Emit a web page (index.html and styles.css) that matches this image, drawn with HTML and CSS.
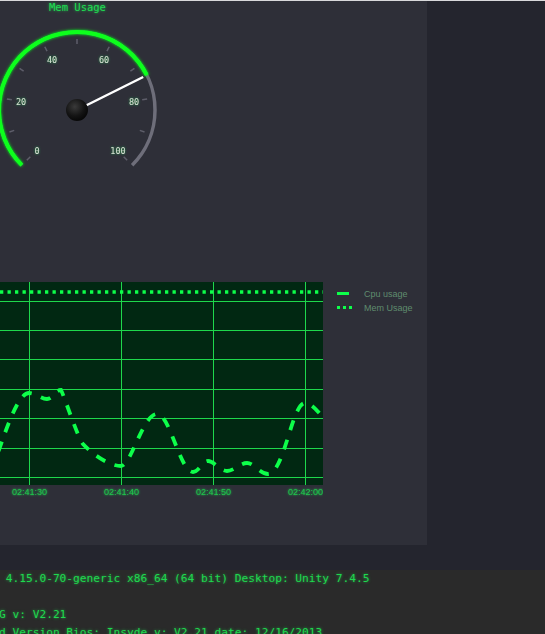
FILE: index.html
```html
<!DOCTYPE html>
<html>
<head>
<meta charset="utf-8">
<link rel="stylesheet" href="styles.css">
</head>
<body>
<div class="topline"></div>
<div class="main">
  <div class="panel">
    <div class="gauge">
      <div class="gauge-title">Mem Usage</div>
      <svg class="gauge-svg" width="160" height="160" viewBox="0 14 160 160">
        <defs>
          <filter id="glow" x="-20%" y="-20%" width="140%" height="140%">
            <feGaussianBlur stdDeviation="1.6" result="b"/>
            <feMerge><feMergeNode in="b"/><feMergeNode in="SourceGraphic"/></feMerge>
          </filter>
          <filter id="tglow" x="-50%" y="-50%" width="200%" height="200%">
            <feGaussianBlur stdDeviation="1.2" result="b"/>
            <feFlood flood-color="#20ff60" flood-opacity="0.55"/>
            <feComposite in2="b" operator="in" result="g"/>
            <feMerge><feMergeNode in="g"/><feMergeNode in="SourceGraphic"/></feMerge>
          </filter>
          <radialGradient id="hub" cx="40%" cy="35%" r="70%">
            <stop offset="0" stop-color="#3a3a3a"/>
            <stop offset="0.6" stop-color="#141414"/>
            <stop offset="1" stop-color="#050505"/>
          </radialGradient>
        </defs>
        <path class="arc-bg" d="M 21.85 165.15 A 78 78 0 1 1 132.15 165.15"/>
        <path class="arc-val" filter="url(#glow)" d="M 21.85 165.15 A 78 78 0 1 1 146.8 75.2"/>
        <g class="ticks">
          <line x1="30.33" y1="156.67" x2="26.8" y2="160.2"/>
          <line x1="14.23" y1="130.39" x2="9.47" y2="131.94"/>
          <line x1="11.81" y1="99.68" x2="6.87" y2="98.9"/>
          <line x1="23.61" y1="71.21" x2="19.56" y2="68.27"/>
          <line x1="47.04" y1="51.19" x2="44.77" y2="46.74"/>
          <line x1="77" y1="44" x2="77" y2="39"/>
          <line x1="106.96" y1="51.19" x2="109.23" y2="46.74"/>
          <line x1="130.39" y1="71.21" x2="134.44" y2="68.27"/>
          <line x1="142.19" y1="99.68" x2="147.13" y2="98.9"/>
          <line x1="139.77" y1="130.39" x2="144.53" y2="131.94"/>
          <line x1="123.67" y1="156.67" x2="127.2" y2="160.2"/>
        </g>
        <g class="labels" filter="url(#tglow)">
          <text x="37" y="154">0</text>
          <text x="21" y="105">20</text>
          <text x="52" y="63">40</text>
          <text x="104" y="63">60</text>
          <text x="134" y="105">80</text>
          <text x="118" y="154">100</text>
        </g>
        <line class="needle" x1="77" y1="110" x2="143.2" y2="77"/>
        <circle cx="77" cy="110" r="11" fill="url(#hub)"/>
      </svg>
    </div>

    <div class="chart-row">
      <svg class="chart" width="323" height="215" viewBox="0 282 323 215">
        <defs>
          <filter id="lglow" x="-20%" y="-50%" width="140%" height="200%">
            <feGaussianBlur stdDeviation="1" result="b"/>
            <feMerge><feMergeNode in="b"/><feMergeNode in="SourceGraphic"/></feMerge>
          </filter>
          <clipPath id="plotclip"><rect x="0" y="282" width="323" height="203"/></clipPath>
        </defs>
        <rect class="plot-bg" x="0" y="282" width="323" height="203"/>
        <g class="grid">
          <line x1="0" y1="301.5" x2="323" y2="301.5"/>
          <line x1="0" y1="330.5" x2="323" y2="330.5"/>
          <line x1="0" y1="359.5" x2="323" y2="359.5"/>
          <line x1="0" y1="389.5" x2="323" y2="389.5"/>
          <line x1="0" y1="418.5" x2="323" y2="418.5"/>
          <line x1="0" y1="448.5" x2="323" y2="448.5"/>
          <line x1="0" y1="477.5" x2="323" y2="477.5"/>
          <line x1="29.5" y1="282" x2="29.5" y2="485"/>
          <line x1="121.5" y1="282" x2="121.5" y2="485"/>
          <line x1="213.5" y1="282" x2="213.5" y2="485"/>
          <line x1="305.5" y1="282" x2="305.5" y2="485"/>
        </g>
        <g clip-path="url(#plotclip)">
          <line class="mem-line" x1="0" y1="292" x2="330" y2="292"/>
          <path class="cpu-line" d="M -8 470 C 4 436, 17 393, 29 393 C 36 393, 41 399, 47 399 C 53 399, 55 390, 61 390 C 65 398, 77 436, 83 444 C 90 452, 108 466, 121 466 C 131 466, 143 414, 157 414 C 170 414, 180 472, 193 472 C 199 472, 202 461, 208 461 C 214 461, 220 471, 227 471 C 234 471, 240 463, 247 463 C 254 463, 260 474, 268 474 C 284 474, 292 403, 305 403 C 313 403, 320 415, 330 425"/>
        </g>
        <g class="xlabels" filter="url(#lglow)">
          <text x="29.5" y="495">02:41:30</text>
          <text x="121.5" y="495">02:41:40</text>
          <text x="213.5" y="495">02:41:50</text>
          <text x="305.5" y="495">02:42:00</text>
        </g>
      </svg>
      <div class="legend">
        <div class="legend-item">
          <span class="swatch-solid"></span>
          <span class="legend-text">Cpu usage</span>
        </div>
        <div class="legend-item">
          <span class="swatch-dots"><i></i><i></i><i></i></span>
          <span class="legend-text">Mem Usage</span>
        </div>
      </div>
    </div>
  </div>
</div>
<div class="strip"></div>
<div class="console">
  <div class="console-text">
    <div class="cline"> 4.15.0-70-generic x86_64 (64 bit) Desktop: Unity 7.4.5</div>
    <div class="cline">&nbsp;</div>
    <div class="cline">G v: V2.21</div>
    <div class="cline">d Version Bios: Insyde v: V2.21 date: 12/16/2013</div>
  </div>
</div>
</body>
</html>
```

FILE: styles.css
```css
html, body {
  margin: 0;
  padding: 0;
}
body {
  width: 545px;
  height: 634px;
  overflow: hidden;
  background: #24252e;
  font-family: "DejaVu Sans Mono", monospace;
}
.topline {
  height: 1px;
  background: #d9d9db;
}
.main {
  display: flex;
}
.panel {
  width: 427px;
  height: 544px;
  background: #2e2f38;
  display: flex;
  flex-direction: column;
}
.gauge {
  width: 160px;
  height: 173px;
}
.gauge-title {
  width: 155px;
  height: 13px;
  line-height: 13px;
  text-align: center;
  font-family: "DejaVu Sans Mono", monospace;
  font-size: 10.5px;
  color: #1fdc52;
  text-shadow: 0 0 3px rgba(30, 255, 90, 0.7);
}
.gauge-svg {
  display: block;
}
.arc-bg {
  fill: none;
  stroke: #6e6e7a;
  stroke-width: 3.5;
}
.arc-val {
  fill: none;
  stroke: #0cff1c;
  stroke-width: 4;
}
.ticks line {
  stroke: #5e5e6a;
  stroke-width: 1.5;
}
.labels text {
  font-family: "DejaVu Sans Mono", monospace;
  font-size: 8.5px;
  fill: #d4e2d4;
  text-anchor: middle;
}
.needle {
  stroke: #ffffff;
  stroke-width: 2.5;
}
.chart-row {
  display: flex;
  margin-top: 108px;
}
.chart {
  display: block;
}
.plot-bg {
  fill: #012812;
}
.grid line {
  stroke: #1ed84c;
  stroke-width: 1;
}
.mem-line {
  stroke: #0dff4a;
  stroke-width: 3.3;
  stroke-dasharray: 3.3 4.2;
}
.cpu-line {
  fill: none;
  stroke: #0dff4a;
  stroke-width: 3.8;
  stroke-dasharray: 10 10;
}
.xlabels text {
  font-family: "Liberation Sans", Arial, sans-serif;
  font-size: 9px;
  fill: #1ec84c;
  text-anchor: middle;
}
.legend {
  margin-left: 14px;
  padding-top: 6px;
  display: flex;
  flex-direction: column;
  gap: 3px;
}
.legend-item {
  display: flex;
  align-items: center;
  height: 11px;
}
.swatch-solid {
  width: 12px;
  height: 3px;
  background: #0dff4a;
}
.swatch-dots {
  width: 15px;
  height: 3px;
  display: flex;
  gap: 3px;
}
.swatch-dots i {
  width: 3px;
  height: 3px;
  background: #0dff4a;
}
.legend-text {
  margin-left: 15px;
  font-family: "Liberation Sans", Arial, sans-serif;
  font-size: 9px;
  color: #5f8c6e;
}
.legend-item:nth-child(2) .legend-text {
  margin-left: 12px;
}
.strip {
  height: 25px;
}
.console {
  height: 64px;
  background: #2a2a2a;
  overflow: hidden;
}
.console-text {
  margin-left: -1px;
  font-family: "DejaVu Sans Mono", monospace;
  font-size: 11.2px;
  line-height: 18px;
  color: #1fd84e;
  text-shadow: 0 0 3px rgba(30, 255, 90, 0.6);
}
.cline {
  white-space: pre;
  height: 18px;
}
```
